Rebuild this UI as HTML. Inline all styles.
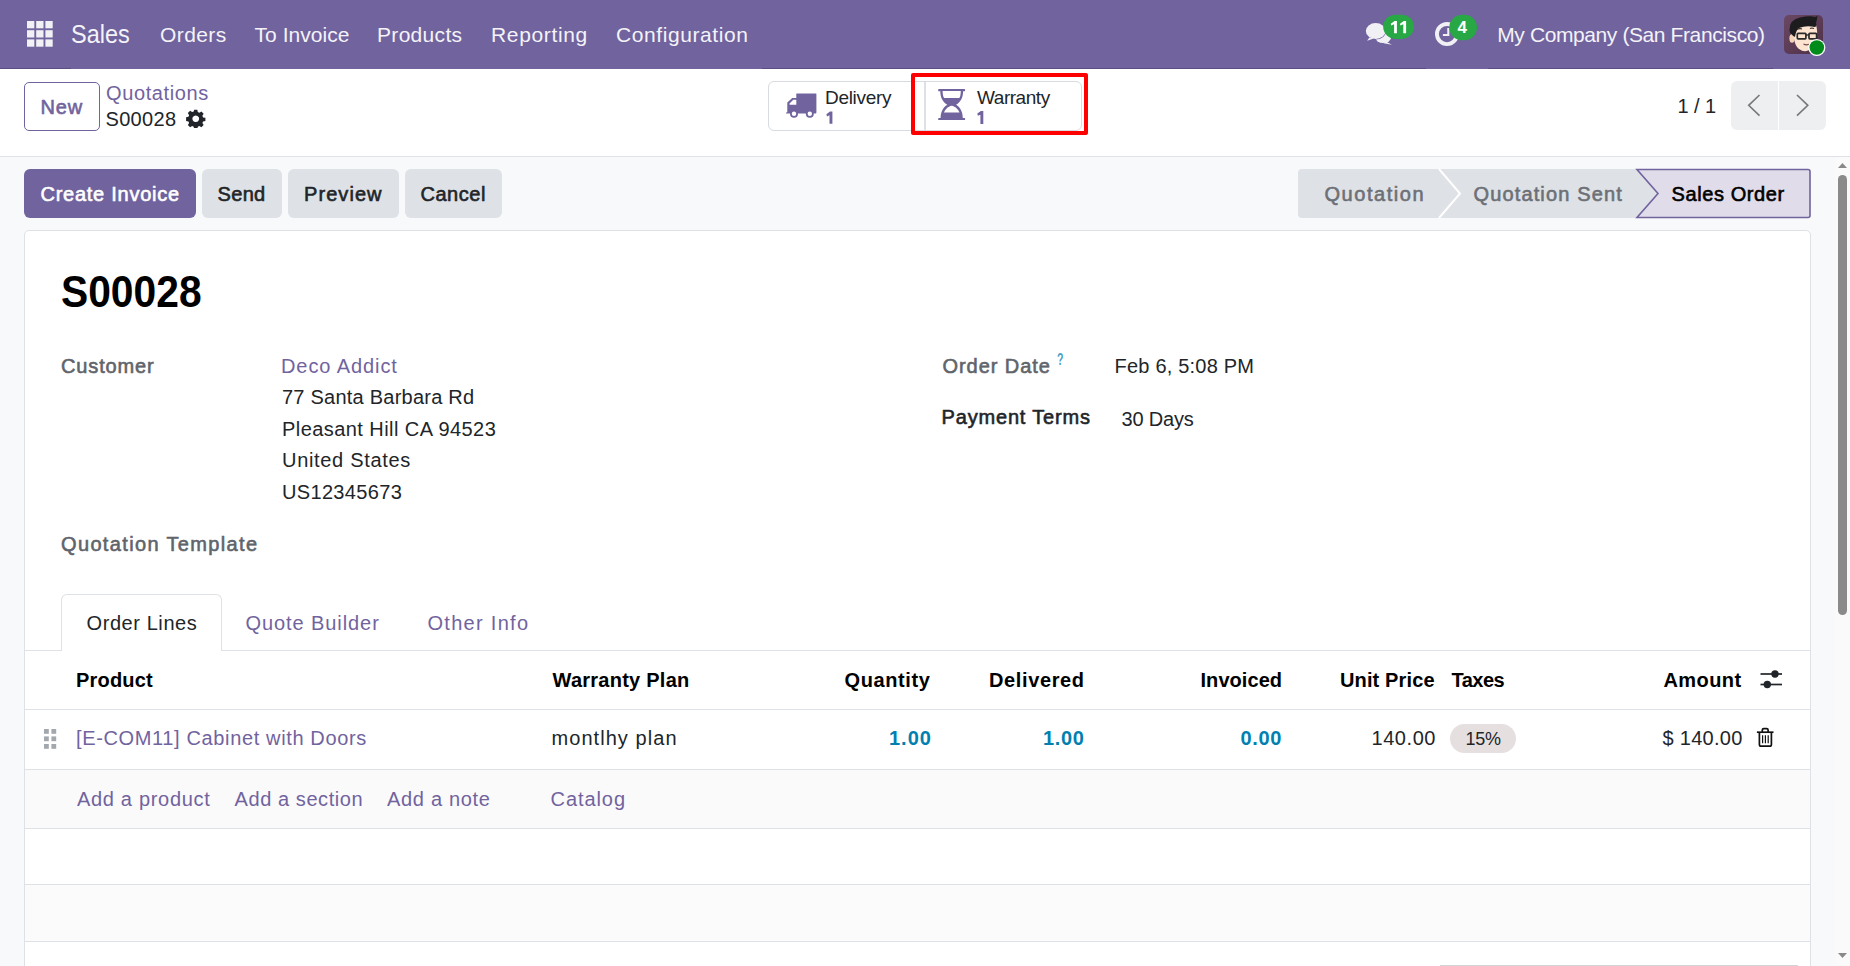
<!DOCTYPE html>
<html><head><meta charset="utf-8"><title>S00028</title>
<style>
html,body{margin:0;padding:0;width:1850px;height:966px;overflow:hidden;background:#f8f9fa;font-family:"Liberation Sans",sans-serif;}
.a{position:absolute;box-sizing:border-box;}
.t{position:absolute;line-height:1;white-space:nowrap;}
</style></head><body>
<!-- navbar -->
<div class="a" style="left:0;top:0;width:1850px;height:69px;background:#71639e;"></div>
<div class="a" style="left:0;top:68px;width:71px;height:1px;background:#5a4f80;"></div>
<div class="a" style="left:762px;top:68px;width:664px;height:1px;background:#5a4f80;"></div>
<div class="a" style="left:1488px;top:68px;width:285px;height:1px;background:#5a4f80;"></div>
<!-- apps grid -->
<svg class="a" style="left:26px;top:20px" width="28" height="28" viewBox="0 0 28 28">
<g fill="#f1f0f5">
<rect x="1" y="1" width="7.3" height="7.3"/><rect x="10.2" y="1" width="7.3" height="7.3"/><rect x="19.4" y="1" width="7.3" height="7.3"/>
<rect x="1" y="10.2" width="7.3" height="7.3"/><rect x="10.2" y="10.2" width="7.3" height="7.3"/><rect x="19.4" y="10.2" width="7.3" height="7.3"/>
<rect x="1" y="19.4" width="7.3" height="7.3"/><rect x="10.2" y="19.4" width="7.3" height="7.3"/><rect x="19.4" y="19.4" width="7.3" height="7.3"/>
</g></svg>
<!-- chat icon -->
<svg class="a" style="left:1360px;top:12px" width="60" height="40" viewBox="0 0 60 40">
<g fill="#f1f0f5">
<ellipse cx="23.2" cy="24.6" rx="8.2" ry="6.4"/>
<path d="M26 29.5 L31.9 32.8 L23.5 31.2 Z"/>
</g>
<ellipse cx="15.7" cy="19" rx="10.6" ry="8.6" fill="#71639e"/>
<g fill="#f1f0f5">
<ellipse cx="15.7" cy="19" rx="9.9" ry="7.9"/>
<path d="M9.6 25.2 L7.1 28.7 L13.8 26.6 Z"/>
</g>
<rect x="23.2" y="2.7" width="30.8" height="24.2" rx="12.1" fill="#28a745"/>
<g fill="#ffffff">
<path d="M34.1 21.3 V12.3 L31.2 13.6 L30.8 11.7 L34.6 8.9 H36.9 V21.3 Z"/>
<path d="M43.3 21.3 V12.3 L40.4 13.6 L40 11.7 L43.8 8.9 H46.1 V21.3 Z"/>
</g>
</svg>
<!-- clock icon -->
<svg class="a" style="left:1428px;top:12px" width="54" height="40" viewBox="0 0 54 40">
<circle cx="19" cy="22.1" r="10.05" fill="none" stroke="#f1f0f5" stroke-width="3.9"/>
<path d="M20.3 16 V23 H14.9" fill="none" stroke="#f1f0f5" stroke-width="2.1"/>
<rect x="21.3" y="2.7" width="27.7" height="25.5" rx="12.75" fill="#28a745"/>
</svg>
<span class="t" style="left:1457.4px;top:18.6px;font-size:17px;font-weight:700;color:#fff;">4</span>
<!-- avatar -->
<svg class="a" style="left:1784px;top:15px" width="48" height="48" viewBox="0 0 48 48">
<defs><linearGradient id="av" x1="0" y1="0" x2="1" y2="1"><stop offset="0" stop-color="#6a4864"/><stop offset="1" stop-color="#4f2f48"/></linearGradient></defs>
<rect x="0" y="0" width="39" height="39" rx="5" fill="url(#av)"/>
<ellipse cx="8" cy="23.5" rx="2.6" ry="4.2" fill="#f4d2b8"/>
<path d="M9.5 12 Q9 30 15 34 Q20 37.5 24 35.5 Q30 32 32.5 25 Q34 16 32 10 Q20 8 9.5 12 Z" fill="#fce4d0"/>
<path d="M5.5 15 Q5 5 16 2.5 Q26 0.5 31 2 L33.5 1 Q33 5 32 8 Q33 11 31 12 Q22 10 15 13 Q12 15 11 22 Q8.5 21 7.5 19 Q5.5 18 5.5 15 Z" fill="#1c1c1e"/>
<path d="M13 14.5 Q15.5 13 18 14 M26 13.5 Q28 12.5 30 13.5" stroke="#3a2a2a" stroke-width="1.1" fill="none"/>
<rect x="13.3" y="18.3" width="8.6" height="5.6" rx="0.8" fill="none" stroke="#2a2a2a" stroke-width="1.7"/>
<rect x="25" y="18.3" width="7.6" height="5.6" rx="0.8" fill="none" stroke="#2a2a2a" stroke-width="1.7"/>
<path d="M21.9 20 H25" stroke="#2a2a2a" stroke-width="1.4"/>
<path d="M19.5 29 Q22 30.5 25 29.3" stroke="#7a4a4a" stroke-width="1.1" fill="#fff"/>
<circle cx="32.8" cy="32.5" r="8.6" fill="#ffffff"/>
<circle cx="32.8" cy="32.5" r="7.3" fill="#008b1a"/>
</svg>
<!-- control panel -->
<div class="a" style="left:0;top:69px;width:1850px;height:88px;background:#ffffff;border-bottom:1px solid #dee2e6;"></div>
<div class="a" style="left:24px;top:82px;width:76px;height:49px;border:1px solid #71639e;border-radius:5px;background:#fff;"></div>
<!-- gear -->
<svg class="a" style="left:186.1px;top:108.6px" width="19.5" height="19.5" viewBox="0 0 20 20">
<path fill="#212529" d="M8.4 0.8h3.2l0.5 2.4 1.6 0.7 2.1-1.3 2.3 2.3-1.3 2.1 0.7 1.6 2.4 0.5v3.2l-2.4 0.5-0.7 1.6 1.3 2.1-2.3 2.3-2.1-1.3-1.6 0.7-0.5 2.4H8.4l-0.5-2.4-1.6-0.7-2.1 1.3-2.3-2.3 1.3-2.1-0.7-1.6-2.4-0.5V8.4l2.4-0.5 0.7-1.6-1.3-2.1 2.3-2.3 2.1 1.3 1.6-0.7z M10 6.6a3.4 3.4 0 1 0 0.01 0z"/>
</svg>
<!-- smart buttons -->
<div class="a" style="left:768px;top:81px;width:314px;height:50px;border:1px solid #d8dbe0;border-radius:6px;background:#fff;"></div>
<div class="a" style="left:924px;top:82px;width:2px;height:48px;background:#dde1e6;"></div>
<!-- truck -->
<svg class="a" style="left:782px;top:86px" width="40" height="40" viewBox="0 0 40 40">
<g fill="#71639e">
<path d="M14.3 7.7 Q14.3 7.4 14.7 7.4 H34 Q34.4 7.4 34.4 7.8 V26.2 Q34.4 27.6 33.5 27.6 H4.5 Q4 27.6 4 27 Q4 26.2 5.3 26.2 V16.6 L10.2 12 H14.3 Z"/>
<circle cx="12" cy="27.8" r="4"/><circle cx="27.8" cy="27.8" r="4"/>
</g>
<g fill="#ffffff">
<path d="M7.6 18.8 V17.6 L11.3 13.8 H14.3 V18.8 Z"/>
<circle cx="12" cy="27.8" r="2.2"/><circle cx="27.8" cy="27.8" r="2.2"/>
</g>
</svg>
<!-- hourglass -->
<svg class="a" style="left:932px;top:84px" width="40" height="40" viewBox="0 0 40 40">
<g fill="#71639e">
<rect x="6.2" y="5.1" width="26.9" height="2.1" rx="0.6"/>
<rect x="6.2" y="34.1" width="26.9" height="2.0" rx="0.6"/>
<path d="M8.3 7 C8.3 14 11 18 15.3 20.8 C11 23.5 8.6 28 8.6 34.3 L30.8 34.3 C30.8 28 28.4 23.5 24.1 20.8 C28.4 18 31.1 14 31.1 7 Z"/>
</g>
<g fill="#ffffff">
<path d="M10.6 7.1 L28.8 7.1 C28.8 10 28.4 12.5 27.3 14.1 L12.1 14.1 C11 12.5 10.6 10 10.6 7.1 Z"/>
<path d="M19.7 21.7 C23.3 22.3 26.3 25.4 27.5 28.6 L11.9 28.6 C13.1 25.4 16.1 22.3 19.7 21.7 Z"/>
</g>
</svg>
<!-- smart button counts -->
<svg class="a" style="left:0;top:0;overflow:visible" width="1" height="1">
<path fill="#71639e" d="M977.3 113.6 L980.9 111 H983.3 V123.9 H980.4 V114.7 L977.9 115.8 Z"/>
<path fill="#71639e" d="M826.4 114.2 L830 111.6 H832.4 V123.8 H829.5 V115.3 L827 116.4 Z"/>
</svg>
<!-- red highlight -->
<div class="a" style="left:911px;top:73px;width:177px;height:62px;border:4px solid #ff0000;border-radius:2px;"></div>
<!-- pager -->
<div class="a" style="left:1731px;top:81px;width:95px;height:49px;border-radius:6px;background:#eeeff1;"></div>
<div class="a" style="left:1778px;top:81px;width:1px;height:49px;background:#ffffff;"></div>
<svg class="a" style="left:1740px;top:90px" width="80" height="30" viewBox="0 0 80 30">
<path d="M19.5 5 L8.7 15.3 L19.5 25.6" fill="none" stroke="#787878" stroke-width="1.6"/>
<path d="M57 5 L67.8 15.3 L57 25.6" fill="none" stroke="#787878" stroke-width="1.6"/>
</svg>
<!-- action buttons -->
<div class="a" style="left:24px;top:169px;width:172px;height:49px;border-radius:6px;background:#71639e;"></div>
<div class="a" style="left:202px;top:169px;width:80px;height:49px;border-radius:6px;background:#dee1e5;"></div>
<div class="a" style="left:288px;top:169px;width:111px;height:49px;border-radius:6px;background:#dee1e5;"></div>
<div class="a" style="left:405px;top:169px;width:97px;height:49px;border-radius:6px;background:#dee1e5;"></div>
<!-- statusbar -->
<svg class="a" style="left:1297px;top:168px" width="516" height="51" viewBox="0 0 516 51">
<path d="M1 5 Q1 1 5 1 H340 L361 25.5 L340 50 H5 Q1 50 1 46 Z" fill="#dee1e5"/>
<path d="M142 1 L163 25.5 L142 50" fill="none" stroke="#ffffff" stroke-width="2"/>
<path d="M340 1.5 H511 Q513 1.5 513 3.5 V47.5 Q513 49.5 511 49.5 H340 L361 25.5 Z" fill="#e0dcea" stroke="#71639e" stroke-width="1.6"/>
</svg>
<!-- sheet -->
<div class="a" style="left:24px;top:230px;width:1787px;height:760px;border:1px solid #dee2e6;border-radius:5px;background:#ffffff;"></div>
<!-- tabs -->
<div class="a" style="left:25px;top:650px;width:1785px;height:1px;background:#dee2e6;"></div>
<div class="a" style="left:61px;top:594px;width:161px;height:57px;border:1px solid #dee2e6;border-bottom:none;border-radius:6px 6px 0 0;background:#ffffff;"></div>
<!-- table -->
<div class="a" style="left:25px;top:709px;width:1785px;height:1px;background:#dee2e6;"></div>
<div class="a" style="left:25px;top:769px;width:1785px;height:1px;background:#dee2e6;"></div>
<div class="a" style="left:25px;top:770px;width:1785px;height:58px;background:#fafafb;"></div>
<div class="a" style="left:25px;top:828px;width:1785px;height:1px;background:#dee2e6;"></div>
<div class="a" style="left:25px;top:884px;width:1785px;height:1px;background:#dee2e6;"></div>
<div class="a" style="left:25px;top:885px;width:1785px;height:56px;background:#fbfbfc;"></div>
<div class="a" style="left:25px;top:941px;width:1785px;height:1px;background:#dee2e6;"></div>
<div class="a" style="left:1440px;top:965px;width:358px;height:1px;background:#d0d4d9;"></div>
<!-- drag handle -->
<svg class="a" style="left:43px;top:728px" width="15" height="22" viewBox="0 0 15 22">
<g fill="#a3a8ae">
<rect x="1" y="1" width="4.8" height="4.8"/><rect x="8.4" y="1" width="4.8" height="4.8"/>
<rect x="1" y="8.4" width="4.8" height="4.8"/><rect x="8.4" y="8.4" width="4.8" height="4.8"/>
<rect x="1" y="16" width="4.8" height="4.8"/><rect x="8.4" y="16" width="4.8" height="4.8"/>
</g></svg>
<!-- tax badge -->
<div class="a" style="left:1450px;top:724px;width:66px;height:29px;border-radius:14.5px;background:#e6dfdf;"></div>
<!-- sliders icon -->
<svg class="a" style="left:1758px;top:668px" width="26" height="22" viewBox="0 0 26 22">
<path d="M2.5 6 H24" stroke="#212529" stroke-width="1.7"/>
<path d="M2.5 16.5 H24" stroke="#212529" stroke-width="1.7"/>
<circle cx="17" cy="6" r="3.7" fill="#212529"/>
<circle cx="9.3" cy="16.5" r="3.7" fill="#212529"/>
</svg>
<!-- trash -->
<svg class="a" style="left:1755px;top:727px" width="21" height="21" viewBox="0 0 21 21">
<g fill="none" stroke="#111" stroke-width="1.7">
<path d="M1.9 5.2 H18.5"/>
<path d="M7.3 5 V3.1 Q7.3 1.6 8.8 1.6 H11.6 Q13.1 1.6 13.1 3.1 V5"/>
<path d="M4.4 5.6 V17.4 Q4.4 19.1 6.1 19.1 H14.7 Q16.4 19.1 16.4 17.4 V5.6"/>
<path d="M7.6 8.3 V16.2 M10.4 8.3 V16.2 M13.2 8.3 V16.2" stroke-width="1.2"/>
</g></svg>
<!-- scrollbar -->
<div class="a" style="left:1835px;top:157px;width:15px;height:809px;background:#fafafa;"></div>
<svg class="a" style="left:1835px;top:158px" width="15" height="12" viewBox="0 0 15 12"><path d="M3 10 L7.5 5 L12 10 Z" fill="#898989"/></svg>
<div class="a" style="left:1838px;top:175px;width:9px;height:440px;border-radius:4.5px;background:#8a8a8a;"></div>
<svg class="a" style="left:1835px;top:950px" width="15" height="12" viewBox="0 0 15 12"><path d="M3 3 L7.5 8 L12 3 Z" fill="#898989"/></svg>

<span id="t0" class="t" style="left:70.50px;top:21.54px;font-size:25px;font-weight:400;color:#f4f3f8;letter-spacing:0.000px;transform:scaleX(0.9378);transform-origin:0 0;">Sales</span>
<span id="t1" class="t" style="left:160.00px;top:24.22px;font-size:21px;font-weight:400;color:#f4f3f8;letter-spacing:0.400px;transform:scaleX(1.0000);transform-origin:0 0;">Orders</span>
<span id="t2" class="t" style="left:254.50px;top:24.22px;font-size:21px;font-weight:400;color:#f4f3f8;letter-spacing:0.044px;transform:scaleX(1.0000);transform-origin:0 0;">To Invoice</span>
<span id="t3" class="t" style="left:377.00px;top:24.22px;font-size:21px;font-weight:400;color:#f4f3f8;letter-spacing:0.314px;transform:scaleX(1.0000);transform-origin:0 0;">Products</span>
<span id="t4" class="t" style="left:491.00px;top:24.42px;font-size:21px;font-weight:400;color:#f4f3f8;letter-spacing:0.650px;transform:scaleX(1.0000);transform-origin:0 0;">Reporting</span>
<span id="t5" class="t" style="left:616.00px;top:24.22px;font-size:21px;font-weight:400;color:#f4f3f8;letter-spacing:0.583px;transform:scaleX(1.0000);transform-origin:0 0;">Configuration</span>
<span id="t6" class="t" style="left:1497.25px;top:24.22px;font-size:21px;font-weight:400;color:#f4f3f8;letter-spacing:-0.400px;transform:scaleX(1.0000);transform-origin:0 0;">My Company (San Francisco)</span>
<span id="t7" class="t" style="left:40.50px;top:96.87px;font-size:20px;font-weight:400;color:#71639e;letter-spacing:0.900px;transform:scaleX(1.0000);transform-origin:0 0;-webkit-text-stroke:0.6px currentColor;">New</span>
<span id="t8" class="t" style="left:106.00px;top:82.67px;font-size:20px;font-weight:400;color:#71639e;letter-spacing:0.622px;transform:scaleX(1.0000);transform-origin:0 0;">Quotations</span>
<span id="t9" class="t" style="left:105.50px;top:108.67px;font-size:20px;font-weight:400;color:#212529;letter-spacing:0.320px;transform:scaleX(1.0000);transform-origin:0 0;">S00028</span>
<span id="t10" class="t" style="left:825.00px;top:87.92px;font-size:19px;font-weight:400;color:#212529;letter-spacing:-0.314px;transform:scaleX(1.0000);transform-origin:0 0;">Delivery</span>
<span id="t11" class="t" style="left:977.00px;top:87.52px;font-size:19px;font-weight:400;color:#212529;letter-spacing:-0.457px;transform:scaleX(1.0000);transform-origin:0 0;">Warranty</span>
<span id="t12" class="t" style="left:1677.50px;top:95.77px;font-size:20px;font-weight:400;color:#212529;letter-spacing:-0.050px;transform:scaleX(1.0000);transform-origin:0 0;">1 / 1</span>
<span id="t13" class="t" style="left:40.50px;top:183.67px;font-size:20px;font-weight:400;color:#ffffff;letter-spacing:0.738px;transform:scaleX(1.0000);transform-origin:0 0;-webkit-text-stroke:0.6px currentColor;">Create Invoice</span>
<span id="t14" class="t" style="left:217.50px;top:183.67px;font-size:20px;font-weight:400;color:#212529;letter-spacing:0.333px;transform:scaleX(1.0000);transform-origin:0 0;-webkit-text-stroke:0.6px currentColor;">Send</span>
<span id="t15" class="t" style="left:304.00px;top:183.67px;font-size:20px;font-weight:400;color:#212529;letter-spacing:1.067px;transform:scaleX(1.0000);transform-origin:0 0;-webkit-text-stroke:0.6px currentColor;">Preview</span>
<span id="t16" class="t" style="left:420.50px;top:183.67px;font-size:20px;font-weight:400;color:#212529;letter-spacing:0.520px;transform:scaleX(1.0000);transform-origin:0 0;-webkit-text-stroke:0.6px currentColor;">Cancel</span>
<span id="t17" class="t" style="left:1324.50px;top:183.97px;font-size:20px;font-weight:400;color:#6c7077;letter-spacing:1.550px;transform:scaleX(1.0000);transform-origin:0 0;-webkit-text-stroke:0.6px currentColor;">Quotation</span>
<span id="t18" class="t" style="left:1473.50px;top:183.97px;font-size:20px;font-weight:400;color:#6c7077;letter-spacing:1.138px;transform:scaleX(1.0000);transform-origin:0 0;-webkit-text-stroke:0.6px currentColor;">Quotation Sent</span>
<span id="t19" class="t" style="left:1671.50px;top:184.07px;font-size:20px;font-weight:400;color:#000000;letter-spacing:0.600px;transform:scaleX(1.0000);transform-origin:0 0;-webkit-text-stroke:0.6px currentColor;">Sales Order</span>
<span id="t20" class="t" style="left:60.90px;top:269.75px;font-size:44px;font-weight:700;color:#000000;letter-spacing:0.000px;transform:scaleX(0.9267);transform-origin:0 0;">S00028</span>
<span id="t21" class="t" style="left:61.00px;top:356.07px;font-size:20px;font-weight:400;color:#5f646b;letter-spacing:0.857px;transform:scaleX(1.0000);transform-origin:0 0;-webkit-text-stroke:0.6px currentColor;">Customer</span>
<span id="t22" class="t" style="left:281.00px;top:356.07px;font-size:20px;font-weight:400;color:#71639e;letter-spacing:0.920px;transform:scaleX(1.0000);transform-origin:0 0;">Deco Addict</span>
<span id="t23" class="t" style="left:282.00px;top:387.07px;font-size:20px;font-weight:400;color:#212529;letter-spacing:0.233px;transform:scaleX(1.0000);transform-origin:0 0;">77 Santa Barbara Rd</span>
<span id="t24" class="t" style="left:282.00px;top:419.07px;font-size:20px;font-weight:400;color:#212529;letter-spacing:0.438px;transform:scaleX(1.0000);transform-origin:0 0;">Pleasant Hill CA 94523</span>
<span id="t25" class="t" style="left:282.00px;top:450.07px;font-size:20px;font-weight:400;color:#212529;letter-spacing:0.683px;transform:scaleX(1.0000);transform-origin:0 0;">United States</span>
<span id="t26" class="t" style="left:282.00px;top:482.07px;font-size:20px;font-weight:400;color:#212529;letter-spacing:0.333px;transform:scaleX(1.0000);transform-origin:0 0;">US12345673</span>
<span id="t27" class="t" style="left:61.00px;top:534.07px;font-size:20px;font-weight:400;color:#5f646b;letter-spacing:1.353px;transform:scaleX(1.0000);transform-origin:0 0;-webkit-text-stroke:0.6px currentColor;">Quotation Template</span>
<span id="t28" class="t" style="left:942.50px;top:355.77px;font-size:20px;font-weight:400;color:#5f646b;letter-spacing:0.933px;transform:scaleX(1.0000);transform-origin:0 0;-webkit-text-stroke:0.6px currentColor;">Order Date</span>
<span id="t29" class="t" style="left:1057.30px;top:351.66px;font-size:16px;font-weight:700;color:#4aa2c0;letter-spacing:0.000px;transform:scaleX(0.6631);transform-origin:0 0;">?</span>
<span id="t30" class="t" style="left:1114.50px;top:355.77px;font-size:20px;font-weight:400;color:#212529;letter-spacing:0.215px;transform:scaleX(1.0000);transform-origin:0 0;">Feb 6, 5:08 PM</span>
<span id="t31" class="t" style="left:941.50px;top:407.07px;font-size:20px;font-weight:400;color:#212529;letter-spacing:0.833px;transform:scaleX(1.0000);transform-origin:0 0;-webkit-text-stroke:0.6px currentColor;">Payment Terms</span>
<span id="t32" class="t" style="left:1121.50px;top:409.07px;font-size:20px;font-weight:400;color:#212529;letter-spacing:-0.167px;transform:scaleX(1.0000);transform-origin:0 0;">30 Days</span>
<span id="t33" class="t" style="left:86.50px;top:612.87px;font-size:20px;font-weight:400;color:#212529;letter-spacing:0.580px;transform:scaleX(1.0000);transform-origin:0 0;">Order Lines</span>
<span id="t34" class="t" style="left:245.50px;top:612.87px;font-size:20px;font-weight:400;color:#71639e;letter-spacing:0.917px;transform:scaleX(1.0000);transform-origin:0 0;">Quote Builder</span>
<span id="t35" class="t" style="left:427.50px;top:612.87px;font-size:20px;font-weight:400;color:#71639e;letter-spacing:1.289px;transform:scaleX(1.0000);transform-origin:0 0;">Other Info</span>
<span id="t36" class="t" style="left:76.00px;top:670.07px;font-size:20px;font-weight:700;color:#000000;letter-spacing:0.200px;transform:scaleX(1.0000);transform-origin:0 0;">Product</span>
<span id="t37" class="t" style="left:552.50px;top:670.07px;font-size:20px;font-weight:700;color:#000000;letter-spacing:0.250px;transform:scaleX(1.0000);transform-origin:0 0;">Warranty Plan</span>
<span id="t38" class="t" style="left:844.50px;top:670.07px;font-size:20px;font-weight:700;color:#000000;letter-spacing:0.600px;transform:scaleX(1.0000);transform-origin:0 0;">Quantity</span>
<span id="t39" class="t" style="left:989.00px;top:670.07px;font-size:20px;font-weight:700;color:#000000;letter-spacing:0.625px;transform:scaleX(1.0000);transform-origin:0 0;">Delivered</span>
<span id="t40" class="t" style="left:1200.50px;top:670.07px;font-size:20px;font-weight:700;color:#000000;letter-spacing:0.057px;transform:scaleX(1.0000);transform-origin:0 0;">Invoiced</span>
<span id="t41" class="t" style="left:1340.00px;top:670.07px;font-size:20px;font-weight:700;color:#000000;letter-spacing:0.133px;transform:scaleX(1.0000);transform-origin:0 0;">Unit Price</span>
<span id="t42" class="t" style="left:1451.50px;top:670.07px;font-size:20px;font-weight:700;color:#000000;letter-spacing:-0.500px;transform:scaleX(1.0000);transform-origin:0 0;">Taxes</span>
<span id="t43" class="t" style="left:1663.50px;top:670.07px;font-size:20px;font-weight:700;color:#000000;letter-spacing:0.400px;transform:scaleX(1.0000);transform-origin:0 0;">Amount</span>
<span id="t44" class="t" style="left:76.00px;top:728.07px;font-size:20px;font-weight:400;color:#71639e;letter-spacing:0.637px;transform:scaleX(1.0000);transform-origin:0 0;">[E-COM11] Cabinet with Doors</span>
<span id="t45" class="t" style="left:551.50px;top:728.07px;font-size:20px;font-weight:400;color:#212529;letter-spacing:1.055px;transform:scaleX(1.0000);transform-origin:0 0;">montlhy plan</span>
<span id="t46" class="t" style="left:889.00px;top:728.07px;font-size:20px;font-weight:700;color:#0180b0;letter-spacing:1.000px;transform:scaleX(1.0000);transform-origin:0 0;">1.00</span>
<span id="t47" class="t" style="left:1043.00px;top:728.07px;font-size:20px;font-weight:700;color:#0180b0;letter-spacing:0.667px;transform:scaleX(1.0000);transform-origin:0 0;">1.00</span>
<span id="t48" class="t" style="left:1240.50px;top:728.07px;font-size:20px;font-weight:700;color:#0180b0;letter-spacing:0.667px;transform:scaleX(1.0000);transform-origin:0 0;">0.00</span>
<span id="t49" class="t" style="left:1371.50px;top:728.07px;font-size:20px;font-weight:400;color:#212529;letter-spacing:0.560px;transform:scaleX(1.0000);transform-origin:0 0;">140.00</span>
<span id="t50" class="t" style="left:1465.50px;top:729.76px;font-size:18px;font-weight:400;color:#212529;letter-spacing:-0.300px;transform:scaleX(1.0000);transform-origin:0 0;">15%</span>
<span id="t51" class="t" style="left:1662.50px;top:728.07px;font-size:20px;font-weight:400;color:#212529;letter-spacing:0.286px;transform:scaleX(1.0000);transform-origin:0 0;">$ 140.00</span>
<span id="t52" class="t" style="left:77.00px;top:789.07px;font-size:20px;font-weight:400;color:#71639e;letter-spacing:0.683px;transform:scaleX(1.0000);transform-origin:0 0;">Add a product</span>
<span id="t53" class="t" style="left:234.50px;top:789.07px;font-size:20px;font-weight:400;color:#71639e;letter-spacing:0.583px;transform:scaleX(1.0000);transform-origin:0 0;">Add a section</span>
<span id="t54" class="t" style="left:387.00px;top:789.07px;font-size:20px;font-weight:400;color:#71639e;letter-spacing:0.689px;transform:scaleX(1.0000);transform-origin:0 0;">Add a note</span>
<span id="t55" class="t" style="left:550.50px;top:789.07px;font-size:20px;font-weight:400;color:#71639e;letter-spacing:0.933px;transform:scaleX(1.0000);transform-origin:0 0;">Catalog</span>
</body></html>
